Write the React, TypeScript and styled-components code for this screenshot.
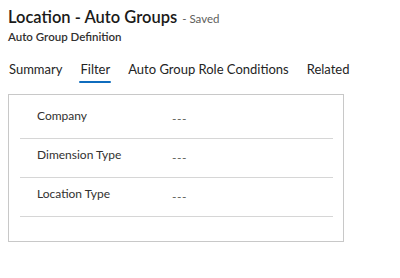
import React from 'react';
import styled, { createGlobalStyle } from 'styled-components';

const GlobalStyle = createGlobalStyle`
    html, body {
        margin: 0;
        padding: 0;
        background: #ffffff;
        font-family: "Segoe UI", Lato, sans-serif;
        color: #242424;
    }
`;

const Page = styled.div`
    width: 400px;
    height: 278px;
    padding: 6px 8px 0 8px;
    box-sizing: border-box;
`;

const Header = styled.div`
    display: flex;
    flex-direction: column;
`;

const TitleRow = styled.div`
    display: flex;
    align-items: baseline;
    gap: 5px;
`;

const Title = styled.h1`
    margin: 0;
    font-size: 16.5px;
    font-weight: 600;
    line-height: 22px;
    color: #1b1a19;
`;

const Status = styled.span`
    font-size: 11.5px;
    color: #605e5c;
`;

const Subtitle = styled.div`
    margin-top: 2px;
    font-size: 11.5px;
    font-weight: 600;
    line-height: 14px;
    color: #323130;
`;

const Tabs = styled.ul`
    list-style: none;
    display: flex;
    gap: 16px;
    margin: 16px 0 0 0;
    padding: 0;
`;

const Tab = styled.li<{ $active?: boolean }>`
    position: relative;
    font-size: 13px;
    line-height: 18px;
    padding: 0 1px 5px 1px;
    color: #242424;

    &::after {
        content: '';
        display: ${p => (p.$active ? 'block' : 'none')};
        position: absolute;
        left: 0;
        right: 0;
        bottom: 0;
        height: 2px;
        border-radius: 2px;
        background: #0f6cbd;
    }
`;

const Panel = styled.section`
    margin-top: 11px;
    width: 336px;
    height: 148px;
    box-sizing: border-box;
    border: 1px solid #c8c8c8;
    padding: 5px 10px 0 11px;
`;

const Field = styled.div`
    display: grid;
    grid-template-columns: 135px 1fr;
    height: 39px;
    border-bottom: 1px solid #d6d6d6;
    padding-left: 17px;
    box-sizing: border-box;
`;

const Label = styled.span`
    font-size: 12px;
    line-height: 16px;
    padding-top: 8px;
    color: #323130;
`;

const Value = styled.span`
    font-size: 12px;
    line-height: 16px;
    padding-top: 11px;
    color: #605e5c;
    letter-spacing: 0.5px;
`;

const fields = ['Company', 'Dimension Type', 'Location Type'];

export default function App() {
    return (
        <>
            <GlobalStyle />
            <Page>
                <Header>
                    <TitleRow>
                        <Title>Location - Auto Groups</Title>
                        <Status>- Saved</Status>
                    </TitleRow>
                    <Subtitle>Auto Group Definition</Subtitle>
                </Header>
                <Tabs>
                    <Tab>Summary</Tab>
                    <Tab $active>Filter</Tab>
                    <Tab>Auto Group Role Conditions</Tab>
                    <Tab>Related</Tab>
                </Tabs>
                <Panel>
                    {fields.map(f => (
                        <Field key={f}>
                            <Label>{f}</Label>
                            <Value>---</Value>
                        </Field>
                    ))}
                </Panel>
            </Page>
        </>
    );
}
